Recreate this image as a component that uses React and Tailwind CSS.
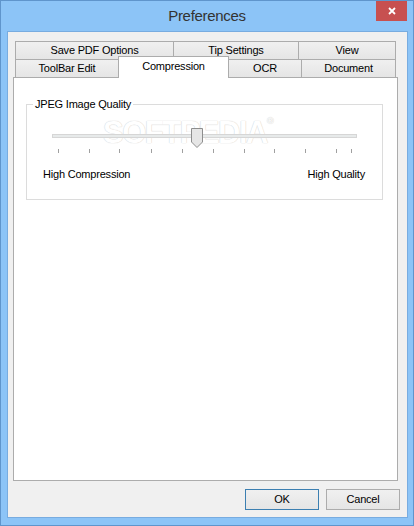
import React from "react";

const font = { fontFamily: '"Liberation Sans", Arial, sans-serif' };

function Tab({ w, children, extra = "" }) {
  return (
    <div
      className={`-ml-px first:ml-0 flex items-center justify-center border border-b-0 border-[#acacac] bg-gradient-to-b from-[#f0f0f0] to-[#e5e5e5] text-[11px] tracking-[-0.2px] text-[#000] ${extra}`}
      style={{ width: w }}
    >
      {children}
    </div>
  );
}

function Slider() {
  const ticks = [58, 89, 119, 151, 182, 213, 244, 274, 305, 336, 351];
  return (
    <svg width="356" height="30" className="block">
      <rect x="25.5" y="8.5" width="304" height="3" fill="#e7eaea" stroke="#d6d6d6" />
      {ticks.map((t) => (
        <line key={t} x1={t - 27 + 0.5} x2={t - 27 + 0.5} y1="23" y2="27" stroke="#a0a0a0" />
      ))}
      <path
        d="M164.5 2.5 H175.5 V16 L170 21.5 L164.5 16 Z"
        fill="#e6e6e6"
        stroke="#8e8e8e"
      />
    </svg>
  );
}

export default function App() {
  return (
    <div style={font} className="w-[414px] h-[526px] flex flex-col bg-[#8cc4f7] border border-[#5f95cc]">
      <div className="relative h-[30px] flex items-center justify-center">
        <span className="text-[15px] tracking-[-0.3px] text-[#333] pt-[1px]">Preferences</span>
        <div className="absolute right-[6px] top-0 w-[31px] h-[20px] bg-[#c75050] flex items-center justify-center">
          <svg width="8" height="8" viewBox="0 0 8 8">
            <path d="M1 1 L7 7 M7 1 L1 7" stroke="#fff" strokeWidth="1.8" />
          </svg>
        </div>
      </div>
      <div className="ml-[6px] mr-[5px] h-[487px] border border-[#78ace0] bg-[#f0f0f0] flex flex-col">
        <div className="h-[9px]" />
        <div className="ml-[7px] w-[381px] flex flex-col">
          <div className="flex h-[18px]">
            <Tab w={159}>Save PDF Options</Tab>
            <Tab w={126}>Tip Settings</Tab>
            <Tab w={98}>View</Tab>
          </div>
          <div className="flex h-[18px] items-end">
            <Tab w={104} extra="h-[18px]">ToolBar Edit</Tab>
            <div className="-ml-px relative z-10 w-[111px] h-[22px] -mb-px border border-b-0 border-[#acacac] bg-white flex items-start justify-center pt-[1px] text-[11px] tracking-[-0.2px]">
              Compression
            </div>
            <Tab w={74} extra="h-[18px]">OCR</Tab>
            <Tab w={95} extra="h-[18px]">Document</Tab>
          </div>
        </div>
        <div className="ml-[5px] w-[385px] h-[404px] border border-[#acacac] bg-white relative">
          <div className="ml-[12px] mt-[26px] w-[357px] h-[96px] border border-[#dcdcdc] relative">
            <div className="absolute -top-[8px] left-[6px] bg-white px-[2px] text-[11px] tracking-[-0.2px] leading-[14px]">
              JPEG Image Quality
            </div>
            <div className="absolute left-[76px] top-[12px] text-[31px] font-bold tracking-[-1.5px] leading-none text-white [text-shadow:0_0_1px_#d4d4d4,0_0_1px_#d4d4d4] select-none">
              SOFTPEDIA
              <span className="text-[9px] align-top">®</span>
            </div>
            <div className="relative mt-[21px]">
              <Slider />
            </div>
            <div className="flex justify-between pl-[16px] pr-[17px] mt-[11px] text-[11px] tracking-[-0.2px] leading-[14px]">
              <span>High Compression</span>
              <span>High Quality</span>
            </div>
          </div>
        </div>
        <div className="flex justify-end gap-[7px] pr-[7px] mt-[8px]">
          <div className="w-[74px] h-[21px] border border-[#3c7fb1] bg-gradient-to-b from-[#f0f0f0] to-[#e5e5e5] flex items-center justify-center text-[11px] tracking-[-0.2px]">
            OK
          </div>
          <div className="w-[74px] h-[21px] border border-[#acacac] bg-gradient-to-b from-[#f0f0f0] to-[#e5e5e5] flex items-center justify-center text-[11px] tracking-[-0.2px]">
            Cancel
          </div>
        </div>
      </div>
    </div>
  );
}
